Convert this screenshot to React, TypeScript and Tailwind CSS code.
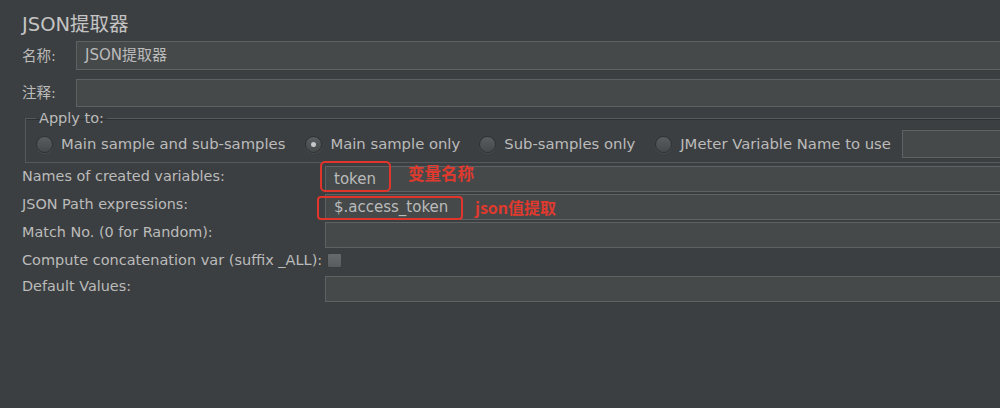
import type { ReactNode } from "react";

const font = "font-['DejaVu_Sans','Noto_Sans_CJK_SC',sans-serif]";

function Field({ value, className = "" }: { value?: string; className?: string }) {
  return (
    <div
      className={`-mr-4 flex flex-1 items-center border border-[#5f6263] bg-[#45494a] px-[8px] text-[15px] text-[#bbbbbb] ${className}`}
    >
      {value}
    </div>
  );
}

function Radio({ checked, label }: { checked?: boolean; label: string }) {
  return (
    <label className="flex items-center gap-[8px]">
      <span className="flex h-[17px] w-[17px] items-center justify-center rounded-full border border-[#2e3031] bg-gradient-to-b from-[#5a5d5f] to-[#46494b] shadow-[0_1px_0_#4a4d4f]">
        {checked && <span className="h-[5px] w-[5px] rounded-full bg-[#c8c8c8]" />}
      </span>
      <span>{label}</span>
    </label>
  );
}

function Row({ label, children }: { label: string; children: ReactNode }) {
  return (
    <div className="relative flex h-[28px] items-stretch py-[1px]">
      <span className="flex w-[303px] shrink-0 items-center pb-[5px] text-[14.4px]">{label}</span>
      {children}
    </div>
  );
}

export default function App() {
  return (
    <div className={`h-[408px] w-[1000px] overflow-hidden bg-[#3c3f41] text-[#bbbbbb] ${font}`}>
      <div className="pl-[22px] pr-0">
        <h1 className="flex h-[41px] items-center pt-[9px] text-[19.5px] text-[#c4c4c4]">JSON提取器</h1>

        <div className="flex h-[29px] items-stretch">
          <span className="flex w-[54px] shrink-0 items-center pt-[2px] text-[14.5px]">名称:</span>
          <Field value="JSON提取器" />
        </div>

        <div className="mt-[9px] flex h-[28px] items-stretch">
          <span className="flex w-[54px] shrink-0 items-center pt-[2px] text-[14.5px]">注释:</span>
          <Field />
        </div>

        <fieldset className="-mr-4 ml-[3px] mt-[2px] h-[54px] border border-[#56595b] pl-[10px] pr-0 shadow-[inset_0_1px_0_#2f3132]">
          <legend className="px-[3px] text-[14.5px] leading-[18px]">Apply to:</legend>
          <div className="mt-[2px] flex h-[30px] items-center text-[14.8px]">
            <Radio label="Main sample and sub-samples" />
            <span className="w-[20px]" />
            <Radio checked label="Main sample only" />
            <span className="w-[19px]" />
            <Radio label="Sub-samples only" />
            <span className="w-[20px]" />
            <Radio label="JMeter Variable Name to use" />
            <span className="w-[11px]" />
            <Field className="h-[28px]" />
          </div>
        </fieldset>

        <div className="mt-[2px]">
          <Row label="Names of created variables:">
            <Field value="token" />
            <span className="absolute left-[298px] top-[-4px] h-[31px] w-[71px] rounded-[5px] border-2 border-[#e0352b]" />
            <span className="absolute left-[386px] top-[-2px] font-['Noto_Sans_CJK_SC',sans-serif] text-[16.5px] font-bold leading-[20px] text-[#e0392e]">
              变量名称
            </span>
          </Row>
          <Row label="JSON Path expressions:">
            <Field value="$.access_token" />
            <span className="absolute left-[295px] top-[3px] h-[24px] w-[146px] rounded-[4px] border-2 border-[#e0352b]" />
            <span className="absolute left-[453px] top-[4px] font-['Noto_Sans_CJK_SC',sans-serif] text-[16px] font-bold leading-[20px] text-[#e0392e]">
              json值提取
            </span>
          </Row>
          <Row label="Match No. (0 for Random):">
            <Field />
          </Row>
          <div className="flex h-[26px] items-center pb-[3px] text-[14.5px]">
            <span>Compute concatenation var (suffix _ALL):</span>
            <span className="ml-[5px] h-[15px] w-[15px] rounded-[2px] border border-[#3a3c3d] bg-gradient-to-b from-[#676a6c] to-[#595c5e]" />
          </div>
          <Row label="Default Values:">
            <Field />
          </Row>
        </div>
      </div>
    </div>
  );
}
